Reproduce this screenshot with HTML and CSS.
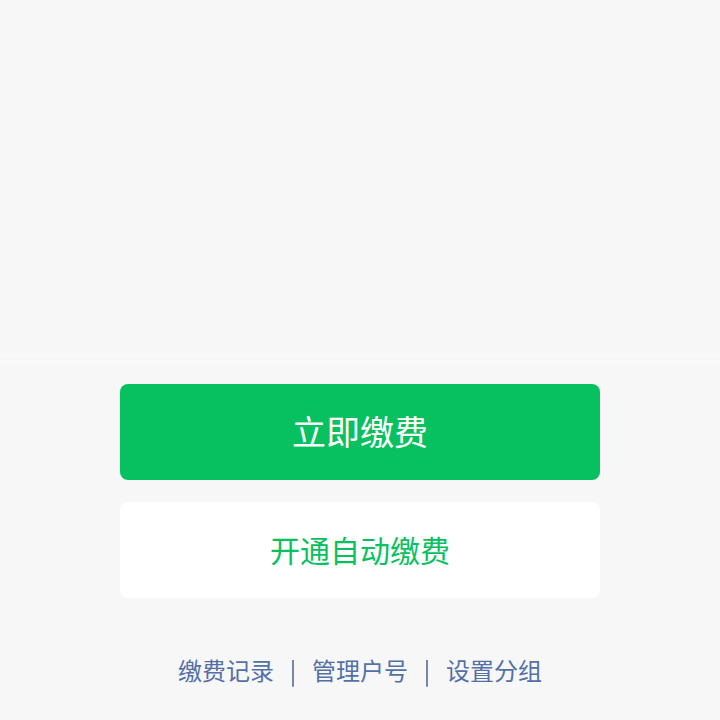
FILE: index.html
```html
<!DOCTYPE html>
<html lang="zh">
<head>
<meta charset="utf-8">
<link rel="stylesheet" href="styles.css">
</head>
<body>
<div class="top"></div>
<div class="divider"></div>
<div class="actions">
  <button class="btn btn-primary">立即缴费</button>
  <button class="btn btn-default">开通自动缴费</button>
  <div class="links">
    <span class="link">缴费记录</span>
    <span class="sep">|</span>
    <span class="link">管理户号</span>
    <span class="sep">|</span>
    <span class="link">设置分组</span>
  </div>
</div>
</body>
</html>
```
FILE: styles.css
```css
html, body {
  margin: 0;
  padding: 0;
  background: #f7f7f7;
  font-family: "Noto Sans CJK SC", "Noto Sans", sans-serif;
}
.top {
  height: 352px;
}
.divider {
  height: 6px;
  background: #f9f9f9;
  border-bottom: 2px solid #f6f6f6;
  box-shadow: 0 3px 0 #fafafa, 0 6px 0 #f8f8f8;
}
.actions {
  display: flex;
  flex-direction: column;
  align-items: center;
  padding-top: 24px;
}
.btn {
  width: 480px;
  height: 96px;
  border: none;
  border-radius: 8px;
  font-family: inherit;
  padding: 0 0 3px 0;
  display: flex;
  align-items: center;
  justify-content: center;
}
.btn-primary {
  background: #07c160;
  color: #ffffff;
  font-size: 34px;
}
.btn-default {
  margin-top: 22px;
  background: #ffffff;
  color: #07c160;
  font-size: 30px;
}
.links {
  width: 364px;
  margin-top: 54px;
  display: flex;
  align-items: center;
  justify-content: space-between;
  font-size: 24px;
  color: #5470a8;
  line-height: 36px;
}
.link {
  width: 96px;
}
.sep {
  width: 8px;
  text-align: center;
  color: #53668f;
  transform: translateZ(0);
  -webkit-font-smoothing: antialiased;
}
```
